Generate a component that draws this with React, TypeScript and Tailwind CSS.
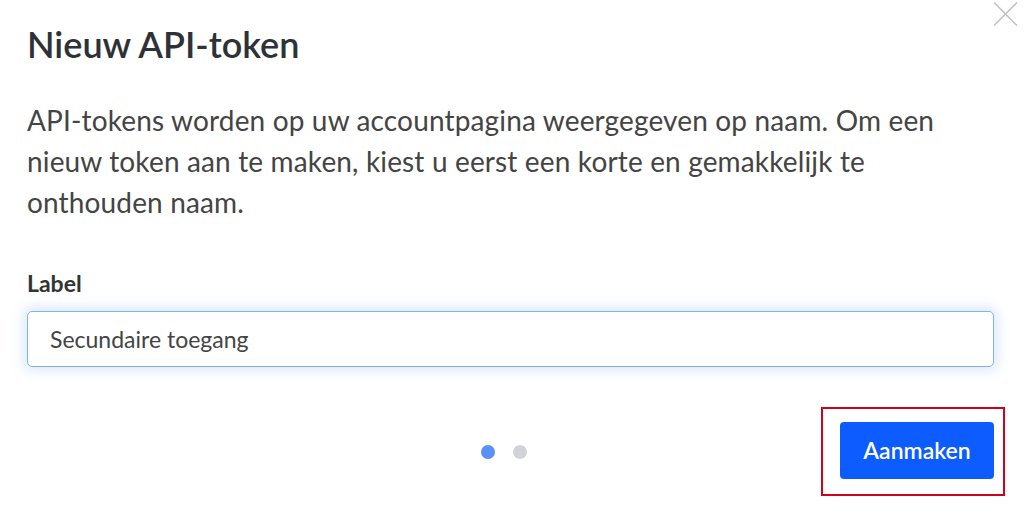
const App = () => {
  return (
    <div className="relative w-[1025px] h-[517px] bg-white font-['Lato',sans-serif] overflow-hidden">
      {/* close */}
      <button className="absolute left-[993px] top-[2px] w-[25px] h-[24px]">
        <svg viewBox="0 0 25 24" className="w-[25px] h-[24px]">
          <path
            d="M1 0.5 L24 23.5 M24 0.5 L1 23.5"
            stroke="#c2c2c2"
            strokeWidth="1.6"
            fill="none"
          />
        </svg>
      </button>

      <section className="pl-[27px] pr-[31px] pt-[22px]">
        <h1 className="text-[36px] leading-[44px] font-semibold text-[#2d3238]">
          Nieuw API-token
        </h1>

        <p className="mt-[34px] text-[28px] leading-[41px] tracking-[0.15px] text-[#444]">
          API-tokens worden op uw accountpagina weergegeven op naam. Om een
          nieuw token aan te maken, kiest u eerst een korte en gemakkelijk te
          onthouden naam.
        </p>

        <label className="block mt-[46px] text-[23px] leading-[28px] font-bold text-[#333]">
          Label
        </label>
        <input
          type="text"
          defaultValue="Secundaire toegang"
          className="mt-[14px] w-[967px] h-[56px] px-[22px] rounded-[5px] border border-[#7fb4ee] bg-white text-[23px] text-[#444] outline-none shadow-[0_0_12px_4px_rgba(120,170,240,0.25)]"
        />

        <div className="flex items-center mt-[40px] h-[89px]">
          <div className="flex gap-[18px] ml-[454px]">
            <span className="w-[14px] h-[14px] rounded-full bg-[#5b8ff9]" />
            <span className="w-[14px] h-[14px] rounded-full bg-[#d1d3d9]" />
          </div>
          <div className="ml-auto mr-[-11px] h-[89px] border-2 border-[#d0021b] pl-[17px] pr-[9px] pt-[13px]">
            <button className="w-[154px] h-[57px] rounded-[4px] bg-[#0c5cff] text-white text-[23px] font-semibold">
              Aanmaken
            </button>
          </div>
        </div>
      </section>
    </div>
  );
};

export default App;
